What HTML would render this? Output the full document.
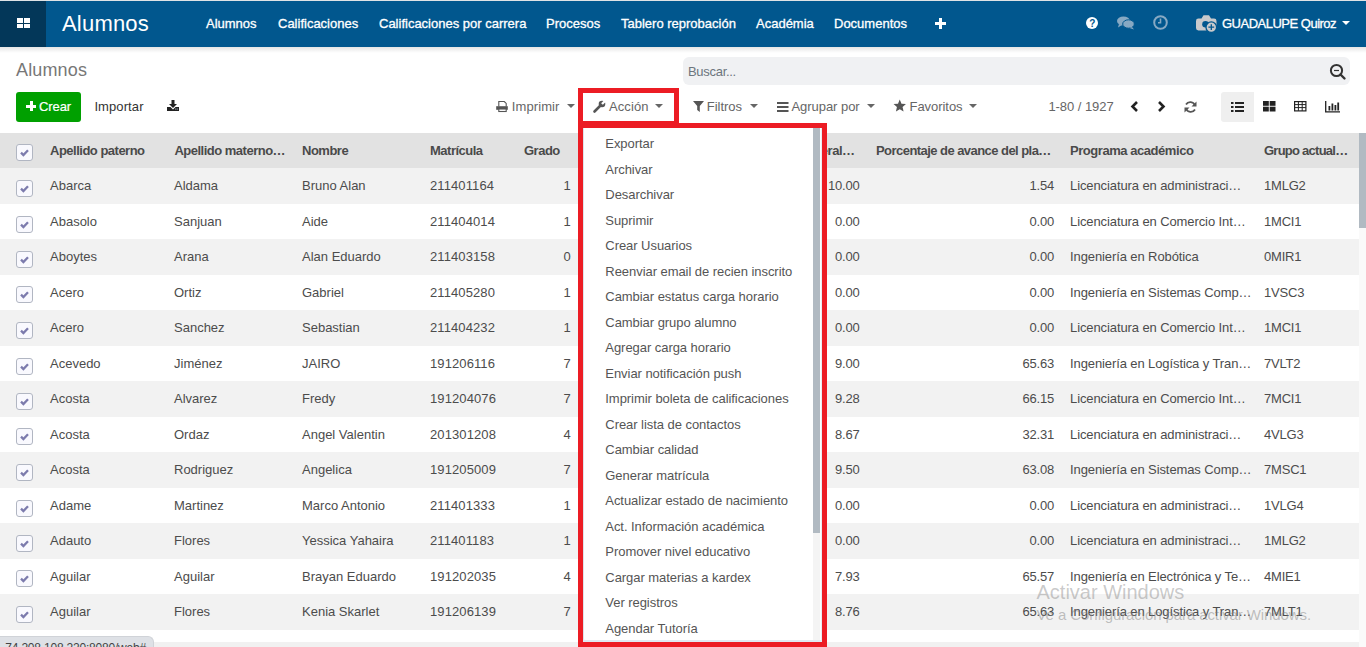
<!DOCTYPE html>
<html><head><meta charset="utf-8"><style>
*{box-sizing:border-box;margin:0;padding:0}
html,body{width:1366px;height:647px;overflow:hidden;background:#fff;font-family:"Liberation Sans",sans-serif;font-size:13px;color:#4c4c4c}
.a{position:absolute;white-space:nowrap}
.b{position:absolute}
svg{position:absolute;overflow:visible}
</style></head><body>
<div class="b" style="left:0;top:0;width:1366px;height:1px;background:#dfe3e6"></div><div class="b" style="left:0;top:1px;width:1366px;height:46px;background:#01578e"></div><div class="b" style="left:0;top:1px;width:46px;height:46px;background:#033759"></div><div class="b" style="left:17px;top:18px;width:6px;height:4.5px;background:#fff"></div><div class="b" style="left:24px;top:18px;width:6px;height:4.5px;background:#fff"></div><div class="b" style="left:17px;top:23.5px;width:6px;height:4.5px;background:#fff"></div><div class="b" style="left:24px;top:23.5px;width:6px;height:4.5px;background:#fff"></div><div class="b" style="left:0;top:47px;width:1366px;height:6px;background:linear-gradient(rgba(0,0,0,.10),rgba(0,0,0,0))"></div><div class="a " style="top:12.88px;font-size:22px;line-height:22px;left:62.00px;color:#fff;letter-spacing:0.2px;">Alumnos</div>
<div class="a " style="top:17.30px;font-size:13px;line-height:13px;left:206.00px;color:#fff;-webkit-text-stroke:0.3px #fff;">Alumnos</div>
<div class="a " style="top:17.30px;font-size:13px;line-height:13px;left:278.00px;color:#fff;-webkit-text-stroke:0.3px #fff;">Calificaciones</div>
<div class="a " style="top:17.30px;font-size:13px;line-height:13px;left:379.00px;color:#fff;-webkit-text-stroke:0.3px #fff;">Calificaciones por carrera</div>
<div class="a " style="top:17.30px;font-size:13px;line-height:13px;left:546.00px;color:#fff;-webkit-text-stroke:0.3px #fff;">Procesos</div>
<div class="a " style="top:17.30px;font-size:13px;line-height:13px;left:621.00px;color:#fff;-webkit-text-stroke:0.3px #fff;">Tablero reprobación</div>
<div class="a " style="top:17.30px;font-size:13px;line-height:13px;left:756.00px;color:#fff;-webkit-text-stroke:0.3px #fff;">Académia</div>
<div class="a " style="top:17.30px;font-size:13px;line-height:13px;left:834.00px;color:#fff;-webkit-text-stroke:0.3px #fff;">Documentos</div>
<div class="b" style="left:935px;top:21.5px;width:11px;height:3px;background:#fff"></div><div class="b" style="left:939px;top:17.5px;width:3px;height:11px;background:#fff"></div><div class="b" style="left:1086.2px;top:17.2px;width:12px;height:12px;border-radius:50%;background:#fff"></div><div class="a " style="top:18.73px;font-size:10px;line-height:10px;left:1089.20px;color:#01578e;font-weight:bold;">?</div>
<svg style="left:1117px;top:16px" width="18" height="14" viewBox="0 0 18 14"><ellipse cx="6.5" cy="5" rx="6.5" ry="4.6" fill="#87a9c3"/><path d="M2 8 L1 11.5 L5 9z" fill="#87a9c3"/><ellipse cx="11.5" cy="8" rx="5.8" ry="4.2" fill="#87a9c3" stroke="#01578e" stroke-width="1"/><path d="M15 11 L17 13.5 L12.5 12z" fill="#87a9c3"/></svg><svg style="left:1153px;top:15px" width="15" height="15" viewBox="0 0 15 15"><circle cx="7.5" cy="7.5" r="6.3" fill="none" stroke="#87a9c3" stroke-width="2"/><path d="M7.5 3.5 V7.8 H5" fill="none" stroke="#87a9c3" stroke-width="1.6"/></svg><svg style="left:1196px;top:14.6px" width="21" height="18" viewBox="0 0 21 18"><path d="M0 6 Q0 3.6 2.4 3.6 H5.5 L7.5 0.3 H13 L15 3.6 H18 Q20.5 3.6 20.5 6 V13 Q20.5 15.4 18 15.4 H2.4 Q0 15.4 0 13z" fill="#c9cacc"/><circle cx="9.5" cy="9.3" r="3.3" fill="#01578e"/><circle cx="15.3" cy="12.2" r="5.3" fill="#c9cacc" stroke="#01578e" stroke-width="1.3"/><path d="M15.3 9.3 V15.1 M12.4 12.2 H18.2" stroke="#01578e" stroke-width="1.3"/></svg><div class="a " style="top:17.20px;font-size:13px;line-height:13px;left:1222.00px;color:#fff;letter-spacing:-0.5px;-webkit-text-stroke:0.3px #fff;">GUADALUPE Quiroz</div>
<div class="b" style="left:1342px;top:21px;width:0;height:0;border-left:4px solid transparent;border-right:4px solid transparent;border-top:4px solid #fff"></div><div class="a " style="top:60.76px;font-size:18px;line-height:18px;left:16.00px;color:#777;letter-spacing:0.15px;">Alumnos</div>
<div class="b" style="left:683px;top:57px;width:667px;height:28px;background:#f0f1f3;border-radius:6px"></div><div class="a " style="top:65.00px;font-size:13px;line-height:13px;left:688.00px;color:#6c757d;letter-spacing:-0.3px;">Buscar...</div>
<svg style="left:1329px;top:63px" width="18" height="18" viewBox="0 0 18 18"><circle cx="7.5" cy="7.5" r="5.6" fill="none" stroke="#333" stroke-width="2"/><path d="M11.5 11.5 L15.5 15.5" stroke="#333" stroke-width="2.4" stroke-linecap="round"/><path d="M5 7.5 H10" stroke="#333" stroke-width="1.2"/></svg><div class="b" style="left:16px;top:92px;width:65px;height:30px;background:#00a000;border-radius:3px"></div><div class="b" style="left:26px;top:104.5px;width:10px;height:3px;background:#fff"></div><div class="b" style="left:29.5px;top:101px;width:3px;height:10px;background:#fff"></div><div class="a " style="top:100.00px;font-size:13px;line-height:13px;left:39.00px;color:#fff;letter-spacing:-0.1px;-webkit-text-stroke:0.2px #fff;">Crear</div>
<div class="a " style="top:100.00px;font-size:13px;line-height:13px;left:94.40px;color:#333;letter-spacing:0.1px;">Importar</div>
<svg style="left:167px;top:100px" width="12" height="11" viewBox="0 0 12 11"><path d="M4.5 0 H7.5 V4 H10 L6 8 L2 4 H4.5z" fill="#222"/><path d="M0 7 H3.5 L6 9.5 L8.5 7 H12 V11 H0z" fill="#222"/><rect x="8.3" y="8.6" width="0.9" height="0.9" fill="#cfe3f5"/><rect x="9.8" y="8.6" width="0.9" height="0.9" fill="#cfe3f5"/></svg><svg style="left:496px;top:101px" width="12" height="11" viewBox="0 0 12 11"><path d="M2.8 5.5 V0.55 H8.3 L10.2 2.4 V5.5" fill="none" stroke="#555" stroke-width="1.1"/><rect x="0.2" y="5.2" width="11.6" height="3.6" fill="#555"/><rect x="2.8" y="8" width="7.4" height="2.5" fill="#fff" stroke="#555" stroke-width="1.1"/></svg><div class="a " style="top:100.00px;font-size:13px;line-height:13px;left:511.80px;color:#666;letter-spacing:0.1px;">Imprimir</div>
<div class="b" style="left:566.5px;top:104px;width:0;height:0;border-left:4px solid transparent;border-right:4px solid transparent;border-top:4px solid #666"></div><svg style="left:593px;top:100px" width="13" height="13" viewBox="0 0 13 13"><path d="M1.5 11.5 L7 6" stroke="#555" stroke-width="2.6" stroke-linecap="round"/><circle cx="9" cy="4" r="3.3" fill="#555"/><path d="M9 4 L12.5 0.5" stroke="#fff" stroke-width="2.4"/></svg><div class="a " style="top:100.00px;font-size:13px;line-height:13px;left:609.00px;color:#666;letter-spacing:0.1px;">Acción</div>
<div class="b" style="left:654.7px;top:104px;width:0;height:0;border-left:4px solid transparent;border-right:4px solid transparent;border-top:4px solid #666"></div><svg style="left:693px;top:101px" width="11" height="11" viewBox="0 0 11 11"><path d="M0 0 H11 L6.8 5 V11 L4.2 9 V5z" fill="#555"/></svg><div class="a " style="top:100.00px;font-size:13px;line-height:13px;left:706.70px;color:#666;letter-spacing:0.0px;">Filtros</div>
<div class="b" style="left:749.5px;top:104px;width:0;height:0;border-left:4px solid transparent;border-right:4px solid transparent;border-top:4px solid #666"></div><svg style="left:776.5px;top:101.5px" width="12" height="10" viewBox="0 0 12 10"><rect x="0" y="0" width="11.5" height="2" fill="#555"/><rect x="0" y="4" width="11.5" height="2" fill="#555"/><rect x="0" y="8" width="11.5" height="2" fill="#555"/></svg><div class="a " style="top:100.00px;font-size:13px;line-height:13px;left:791.50px;color:#666;letter-spacing:-0.05px;">Agrupar por</div>
<div class="b" style="left:866.5px;top:104px;width:0;height:0;border-left:4px solid transparent;border-right:4px solid transparent;border-top:4px solid #666"></div><svg style="left:892.8px;top:99.3px" width="13.5" height="13.5" viewBox="0 0 24 24"><path d="M12 1 L15.1 8.3 L23 9 L17 14.3 L18.8 22 L12 18 L5.2 22 L7 14.3 L1 9 L8.9 8.3z" fill="#555"/></svg><div class="a " style="top:100.00px;font-size:13px;line-height:13px;left:909.50px;color:#666;letter-spacing:-0.05px;">Favoritos</div>
<div class="b" style="left:969px;top:104px;width:0;height:0;border-left:4px solid transparent;border-right:4px solid transparent;border-top:4px solid #666"></div><div class="a " style="top:100.00px;font-size:13px;line-height:13px;left:1048.40px;color:#666;letter-spacing:-0.05px;">1-80 / 1927</div>
<svg style="left:1130px;top:101px" width="9" height="11" viewBox="0 0 9 11"><path d="M7 1 L2.5 5.5 L7 10" fill="none" stroke="#222" stroke-width="2.6"/></svg><svg style="left:1157px;top:101px" width="9" height="11" viewBox="0 0 9 11"><path d="M2 1 L6.5 5.5 L2 10" fill="none" stroke="#222" stroke-width="2.6"/></svg><svg style="left:1184px;top:100.5px" width="13" height="12" viewBox="0 0 13 12"><path d="M11 4.5 A5 5 0 0 0 2 3.5" fill="none" stroke="#555" stroke-width="1.8"/><path d="M2 7.5 A5 5 0 0 0 11 8.5" fill="none" stroke="#555" stroke-width="1.8"/><path d="M12.5 0.5 V5.5 H7.5z" fill="#555"/><path d="M0.5 11.5 V6.5 H5.5z" fill="#555"/></svg><div class="b" style="left:1221px;top:92px;width:33px;height:30px;background:#efefef;border-radius:3px 0 0 3px"></div><svg style="left:1231px;top:101.5px" width="13" height="10" viewBox="0 0 13 10"><rect x="0" y="0" width="2.5" height="2" fill="#222"/><rect x="0" y="4" width="2.5" height="2" fill="#222"/><rect x="0" y="8" width="2.5" height="2" fill="#222"/><rect x="4" y="0" width="9" height="2" fill="#222"/><rect x="4" y="4" width="9" height="2" fill="#222"/><rect x="4" y="8" width="9" height="2" fill="#222"/></svg><svg style="left:1262.5px;top:101px" width="12.5" height="10.5" viewBox="0 0 12.5 10.5"><rect x="0" y="0" width="5.8" height="4.8" fill="#222"/><rect x="6.7" y="0" width="5.8" height="4.8" fill="#222"/><rect x="0" y="5.7" width="5.8" height="4.8" fill="#222"/><rect x="6.7" y="5.7" width="5.8" height="4.8" fill="#222"/></svg><svg style="left:1293.5px;top:101px" width="12.5" height="10.5" viewBox="0 0 12.5 10.5"><rect x="0.6" y="0.6" width="11.3" height="9.3" fill="none" stroke="#222" stroke-width="1.2"/><path d="M0.6 3.6 H11.9 M0.6 6.6 H11.9 M4.4 0.6 V9.9 M8.2 0.6 V9.9" stroke="#222" stroke-width="1"/></svg><svg style="left:1325px;top:100.5px" width="15" height="11.5" viewBox="0 0 15 11.5"><path d="M0.7 0 V10.8 H15" fill="none" stroke="#222" stroke-width="1.3"/><rect x="3.5" y="5" width="1.8" height="4.5" fill="#222"/><rect x="6.5" y="2.5" width="1.8" height="7" fill="#222"/><rect x="9.5" y="4" width="1.8" height="5.5" fill="#222"/><rect x="12.3" y="1.5" width="1.8" height="8" fill="#222"/></svg><div class="b" style="left:0;top:133px;width:1359px;height:35px;background:#e2e2e2"></div><div class="b" style="left:16px;top:144px;width:17px;height:17px;border:1px solid #b1b6c2;border-radius:3px;background:#f9f9fe"></div><svg style="left:16px;top:144px" width="17" height="17" viewBox="0 0 17 17"><path d="M5 8.6 L7.4 11 L12 6.2" fill="none" stroke="#7c7bad" stroke-width="2.3"/></svg><div class="a " style="top:144.00px;font-size:13px;line-height:13px;left:50.00px;color:#4a4a4a;font-weight:bold;letter-spacing:-0.5px;">Apellido paterno</div>
<div class="a " style="top:144.00px;font-size:13px;line-height:13px;left:174.40px;color:#4a4a4a;font-weight:bold;letter-spacing:-0.5px;">Apellido materno…</div>
<div class="a " style="top:144.00px;font-size:13px;line-height:13px;left:302.00px;color:#4a4a4a;font-weight:bold;letter-spacing:-0.5px;">Nombre</div>
<div class="a " style="top:144.00px;font-size:13px;line-height:13px;left:430.00px;color:#4a4a4a;font-weight:bold;letter-spacing:-0.5px;">Matrícula</div>
<div class="a " style="top:144.00px;font-size:13px;line-height:13px;left:524.00px;color:#4a4a4a;font-weight:bold;letter-spacing:-0.5px;">Grado</div>
<div class="a " style="top:144.00px;font-size:13px;line-height:13px;left:876.00px;color:#4a4a4a;font-weight:bold;letter-spacing:-0.55px;">Porcentaje de avance del pla…</div>
<div class="a " style="top:144.00px;font-size:13px;line-height:13px;left:1070.00px;color:#4a4a4a;font-weight:bold;letter-spacing:-0.45px;">Programa académico</div>
<div class="a " style="top:144.00px;font-size:13px;line-height:13px;left:1264.00px;color:#4a4a4a;font-weight:bold;letter-spacing:-0.75px;">Grupo actual…</div>
<div class="a " style="top:144.00px;font-size:13px;line-height:13px;right:511.50px;text-align:right;color:#4a4a4a;font-weight:bold;letter-spacing:-0.5px;">neral…</div>
<div class="b" style="left:0;top:168.0px;width:1359px;height:35.5px;background:#f2f2f2"></div><div class="b" style="left:16px;top:180px;width:17px;height:17px;border:1px solid #b1b6c2;border-radius:3px;background:#f9f9fe"></div><svg style="left:16px;top:180px" width="17" height="17" viewBox="0 0 17 17"><path d="M5 8.6 L7.4 11 L12 6.2" fill="none" stroke="#7c7bad" stroke-width="2.3"/></svg><div class="a " style="top:179.00px;font-size:13px;line-height:13px;left:50.00px;letter-spacing:0px;">Abarca</div>
<div class="a " style="top:179.00px;font-size:13px;line-height:13px;left:174.00px;letter-spacing:0px;">Aldama</div>
<div class="a " style="top:179.00px;font-size:13px;line-height:13px;left:302.00px;letter-spacing:0px;">Bruno Alan</div>
<div class="a " style="top:179.00px;font-size:13px;line-height:13px;left:430.00px;letter-spacing:0.1px;">211401164</div>
<div class="a " style="top:179.00px;font-size:13px;line-height:13px;right:795.40px;text-align:right;">1</div>
<div class="a " style="top:179.00px;font-size:13px;line-height:13px;right:506.50px;text-align:right;letter-spacing:-0.2px;">10.00</div>
<div class="a " style="top:179.00px;font-size:13px;line-height:13px;right:312.00px;text-align:right;letter-spacing:-0.2px;">1.54</div>
<div class="a " style="top:179.00px;font-size:13px;line-height:13px;left:1070.00px;letter-spacing:-0.1px;">Licenciatura en administraci…</div>
<div class="a " style="top:179.00px;font-size:13px;line-height:13px;left:1264.00px;letter-spacing:-0.2px;">1MLG2</div>
<div class="b" style="left:16px;top:216px;width:17px;height:17px;border:1px solid #b1b6c2;border-radius:3px;background:#f9f9fe"></div><svg style="left:16px;top:216px" width="17" height="17" viewBox="0 0 17 17"><path d="M5 8.6 L7.4 11 L12 6.2" fill="none" stroke="#7c7bad" stroke-width="2.3"/></svg><div class="a " style="top:214.50px;font-size:13px;line-height:13px;left:50.00px;letter-spacing:0px;">Abasolo</div>
<div class="a " style="top:214.50px;font-size:13px;line-height:13px;left:174.00px;letter-spacing:0px;">Sanjuan</div>
<div class="a " style="top:214.50px;font-size:13px;line-height:13px;left:302.00px;letter-spacing:0px;">Aide</div>
<div class="a " style="top:214.50px;font-size:13px;line-height:13px;left:430.00px;letter-spacing:0.1px;">211404014</div>
<div class="a " style="top:214.50px;font-size:13px;line-height:13px;right:795.40px;text-align:right;">1</div>
<div class="a " style="top:214.50px;font-size:13px;line-height:13px;right:506.50px;text-align:right;letter-spacing:-0.2px;">0.00</div>
<div class="a " style="top:214.50px;font-size:13px;line-height:13px;right:312.00px;text-align:right;letter-spacing:-0.2px;">0.00</div>
<div class="a " style="top:214.50px;font-size:13px;line-height:13px;left:1070.00px;letter-spacing:-0.1px;">Licenciatura en Comercio Int…</div>
<div class="a " style="top:214.50px;font-size:13px;line-height:13px;left:1264.00px;letter-spacing:-0.2px;">1MCI1</div>
<div class="b" style="left:0;top:239.0px;width:1359px;height:35.5px;background:#f2f2f2"></div><div class="b" style="left:16px;top:251px;width:17px;height:17px;border:1px solid #b1b6c2;border-radius:3px;background:#f9f9fe"></div><svg style="left:16px;top:251px" width="17" height="17" viewBox="0 0 17 17"><path d="M5 8.6 L7.4 11 L12 6.2" fill="none" stroke="#7c7bad" stroke-width="2.3"/></svg><div class="a " style="top:250.00px;font-size:13px;line-height:13px;left:50.00px;letter-spacing:0px;">Aboytes</div>
<div class="a " style="top:250.00px;font-size:13px;line-height:13px;left:174.00px;letter-spacing:0px;">Arana</div>
<div class="a " style="top:250.00px;font-size:13px;line-height:13px;left:302.00px;letter-spacing:0px;">Alan Eduardo</div>
<div class="a " style="top:250.00px;font-size:13px;line-height:13px;left:430.00px;letter-spacing:0.1px;">211403158</div>
<div class="a " style="top:250.00px;font-size:13px;line-height:13px;right:795.40px;text-align:right;">0</div>
<div class="a " style="top:250.00px;font-size:13px;line-height:13px;right:506.50px;text-align:right;letter-spacing:-0.2px;">0.00</div>
<div class="a " style="top:250.00px;font-size:13px;line-height:13px;right:312.00px;text-align:right;letter-spacing:-0.2px;">0.00</div>
<div class="a " style="top:250.00px;font-size:13px;line-height:13px;left:1070.00px;letter-spacing:-0.1px;">Ingeniería en Robótica</div>
<div class="a " style="top:250.00px;font-size:13px;line-height:13px;left:1264.00px;letter-spacing:-0.2px;">0MIR1</div>
<div class="b" style="left:16px;top:286px;width:17px;height:17px;border:1px solid #b1b6c2;border-radius:3px;background:#f9f9fe"></div><svg style="left:16px;top:286px" width="17" height="17" viewBox="0 0 17 17"><path d="M5 8.6 L7.4 11 L12 6.2" fill="none" stroke="#7c7bad" stroke-width="2.3"/></svg><div class="a " style="top:285.50px;font-size:13px;line-height:13px;left:50.00px;letter-spacing:0px;">Acero</div>
<div class="a " style="top:285.50px;font-size:13px;line-height:13px;left:174.00px;letter-spacing:0px;">Ortiz</div>
<div class="a " style="top:285.50px;font-size:13px;line-height:13px;left:302.00px;letter-spacing:0px;">Gabriel</div>
<div class="a " style="top:285.50px;font-size:13px;line-height:13px;left:430.00px;letter-spacing:0.1px;">211405280</div>
<div class="a " style="top:285.50px;font-size:13px;line-height:13px;right:795.40px;text-align:right;">1</div>
<div class="a " style="top:285.50px;font-size:13px;line-height:13px;right:506.50px;text-align:right;letter-spacing:-0.2px;">0.00</div>
<div class="a " style="top:285.50px;font-size:13px;line-height:13px;right:312.00px;text-align:right;letter-spacing:-0.2px;">0.00</div>
<div class="a " style="top:285.50px;font-size:13px;line-height:13px;left:1070.00px;letter-spacing:-0.1px;">Ingeniería en Sistemas Comp…</div>
<div class="a " style="top:285.50px;font-size:13px;line-height:13px;left:1264.00px;letter-spacing:-0.2px;">1VSC3</div>
<div class="b" style="left:0;top:310.0px;width:1359px;height:35.5px;background:#f2f2f2"></div><div class="b" style="left:16px;top:322px;width:17px;height:17px;border:1px solid #b1b6c2;border-radius:3px;background:#f9f9fe"></div><svg style="left:16px;top:322px" width="17" height="17" viewBox="0 0 17 17"><path d="M5 8.6 L7.4 11 L12 6.2" fill="none" stroke="#7c7bad" stroke-width="2.3"/></svg><div class="a " style="top:321.00px;font-size:13px;line-height:13px;left:50.00px;letter-spacing:0px;">Acero</div>
<div class="a " style="top:321.00px;font-size:13px;line-height:13px;left:174.00px;letter-spacing:0px;">Sanchez</div>
<div class="a " style="top:321.00px;font-size:13px;line-height:13px;left:302.00px;letter-spacing:0px;">Sebastian</div>
<div class="a " style="top:321.00px;font-size:13px;line-height:13px;left:430.00px;letter-spacing:0.1px;">211404232</div>
<div class="a " style="top:321.00px;font-size:13px;line-height:13px;right:795.40px;text-align:right;">1</div>
<div class="a " style="top:321.00px;font-size:13px;line-height:13px;right:506.50px;text-align:right;letter-spacing:-0.2px;">0.00</div>
<div class="a " style="top:321.00px;font-size:13px;line-height:13px;right:312.00px;text-align:right;letter-spacing:-0.2px;">0.00</div>
<div class="a " style="top:321.00px;font-size:13px;line-height:13px;left:1070.00px;letter-spacing:-0.1px;">Licenciatura en Comercio Int…</div>
<div class="a " style="top:321.00px;font-size:13px;line-height:13px;left:1264.00px;letter-spacing:-0.2px;">1MCI1</div>
<div class="b" style="left:16px;top:358px;width:17px;height:17px;border:1px solid #b1b6c2;border-radius:3px;background:#f9f9fe"></div><svg style="left:16px;top:358px" width="17" height="17" viewBox="0 0 17 17"><path d="M5 8.6 L7.4 11 L12 6.2" fill="none" stroke="#7c7bad" stroke-width="2.3"/></svg><div class="a " style="top:356.50px;font-size:13px;line-height:13px;left:50.00px;letter-spacing:0px;">Acevedo</div>
<div class="a " style="top:356.50px;font-size:13px;line-height:13px;left:174.00px;letter-spacing:0px;">Jiménez</div>
<div class="a " style="top:356.50px;font-size:13px;line-height:13px;left:302.00px;letter-spacing:0px;">JAIRO</div>
<div class="a " style="top:356.50px;font-size:13px;line-height:13px;left:430.00px;letter-spacing:0.1px;">191206116</div>
<div class="a " style="top:356.50px;font-size:13px;line-height:13px;right:795.40px;text-align:right;">7</div>
<div class="a " style="top:356.50px;font-size:13px;line-height:13px;right:506.50px;text-align:right;letter-spacing:-0.2px;">9.00</div>
<div class="a " style="top:356.50px;font-size:13px;line-height:13px;right:312.00px;text-align:right;letter-spacing:-0.2px;">65.63</div>
<div class="a " style="top:356.50px;font-size:13px;line-height:13px;left:1070.00px;letter-spacing:-0.1px;">Ingeniería en Logística y Tran…</div>
<div class="a " style="top:356.50px;font-size:13px;line-height:13px;left:1264.00px;letter-spacing:-0.2px;">7VLT2</div>
<div class="b" style="left:0;top:381.0px;width:1359px;height:35.5px;background:#f2f2f2"></div><div class="b" style="left:16px;top:393px;width:17px;height:17px;border:1px solid #b1b6c2;border-radius:3px;background:#f9f9fe"></div><svg style="left:16px;top:393px" width="17" height="17" viewBox="0 0 17 17"><path d="M5 8.6 L7.4 11 L12 6.2" fill="none" stroke="#7c7bad" stroke-width="2.3"/></svg><div class="a " style="top:392.00px;font-size:13px;line-height:13px;left:50.00px;letter-spacing:0px;">Acosta</div>
<div class="a " style="top:392.00px;font-size:13px;line-height:13px;left:174.00px;letter-spacing:0px;">Alvarez</div>
<div class="a " style="top:392.00px;font-size:13px;line-height:13px;left:302.00px;letter-spacing:0px;">Fredy</div>
<div class="a " style="top:392.00px;font-size:13px;line-height:13px;left:430.00px;letter-spacing:0.1px;">191204076</div>
<div class="a " style="top:392.00px;font-size:13px;line-height:13px;right:795.40px;text-align:right;">7</div>
<div class="a " style="top:392.00px;font-size:13px;line-height:13px;right:506.50px;text-align:right;letter-spacing:-0.2px;">9.28</div>
<div class="a " style="top:392.00px;font-size:13px;line-height:13px;right:312.00px;text-align:right;letter-spacing:-0.2px;">66.15</div>
<div class="a " style="top:392.00px;font-size:13px;line-height:13px;left:1070.00px;letter-spacing:-0.1px;">Licenciatura en Comercio Int…</div>
<div class="a " style="top:392.00px;font-size:13px;line-height:13px;left:1264.00px;letter-spacing:-0.2px;">7MCI1</div>
<div class="b" style="left:16px;top:428px;width:17px;height:17px;border:1px solid #b1b6c2;border-radius:3px;background:#f9f9fe"></div><svg style="left:16px;top:428px" width="17" height="17" viewBox="0 0 17 17"><path d="M5 8.6 L7.4 11 L12 6.2" fill="none" stroke="#7c7bad" stroke-width="2.3"/></svg><div class="a " style="top:427.50px;font-size:13px;line-height:13px;left:50.00px;letter-spacing:0px;">Acosta</div>
<div class="a " style="top:427.50px;font-size:13px;line-height:13px;left:174.00px;letter-spacing:0px;">Ordaz</div>
<div class="a " style="top:427.50px;font-size:13px;line-height:13px;left:302.00px;letter-spacing:0px;">Angel Valentin</div>
<div class="a " style="top:427.50px;font-size:13px;line-height:13px;left:430.00px;letter-spacing:0.1px;">201301208</div>
<div class="a " style="top:427.50px;font-size:13px;line-height:13px;right:795.40px;text-align:right;">4</div>
<div class="a " style="top:427.50px;font-size:13px;line-height:13px;right:506.50px;text-align:right;letter-spacing:-0.2px;">8.67</div>
<div class="a " style="top:427.50px;font-size:13px;line-height:13px;right:312.00px;text-align:right;letter-spacing:-0.2px;">32.31</div>
<div class="a " style="top:427.50px;font-size:13px;line-height:13px;left:1070.00px;letter-spacing:-0.1px;">Licenciatura en administraci…</div>
<div class="a " style="top:427.50px;font-size:13px;line-height:13px;left:1264.00px;letter-spacing:-0.2px;">4VLG3</div>
<div class="b" style="left:0;top:452.0px;width:1359px;height:35.5px;background:#f2f2f2"></div><div class="b" style="left:16px;top:464px;width:17px;height:17px;border:1px solid #b1b6c2;border-radius:3px;background:#f9f9fe"></div><svg style="left:16px;top:464px" width="17" height="17" viewBox="0 0 17 17"><path d="M5 8.6 L7.4 11 L12 6.2" fill="none" stroke="#7c7bad" stroke-width="2.3"/></svg><div class="a " style="top:463.00px;font-size:13px;line-height:13px;left:50.00px;letter-spacing:0px;">Acosta</div>
<div class="a " style="top:463.00px;font-size:13px;line-height:13px;left:174.00px;letter-spacing:0px;">Rodriguez</div>
<div class="a " style="top:463.00px;font-size:13px;line-height:13px;left:302.00px;letter-spacing:0px;">Angelica</div>
<div class="a " style="top:463.00px;font-size:13px;line-height:13px;left:430.00px;letter-spacing:0.1px;">191205009</div>
<div class="a " style="top:463.00px;font-size:13px;line-height:13px;right:795.40px;text-align:right;">7</div>
<div class="a " style="top:463.00px;font-size:13px;line-height:13px;right:506.50px;text-align:right;letter-spacing:-0.2px;">9.50</div>
<div class="a " style="top:463.00px;font-size:13px;line-height:13px;right:312.00px;text-align:right;letter-spacing:-0.2px;">63.08</div>
<div class="a " style="top:463.00px;font-size:13px;line-height:13px;left:1070.00px;letter-spacing:-0.1px;">Ingeniería en Sistemas Comp…</div>
<div class="a " style="top:463.00px;font-size:13px;line-height:13px;left:1264.00px;letter-spacing:-0.2px;">7MSC1</div>
<div class="b" style="left:16px;top:500px;width:17px;height:17px;border:1px solid #b1b6c2;border-radius:3px;background:#f9f9fe"></div><svg style="left:16px;top:500px" width="17" height="17" viewBox="0 0 17 17"><path d="M5 8.6 L7.4 11 L12 6.2" fill="none" stroke="#7c7bad" stroke-width="2.3"/></svg><div class="a " style="top:498.50px;font-size:13px;line-height:13px;left:50.00px;letter-spacing:0px;">Adame</div>
<div class="a " style="top:498.50px;font-size:13px;line-height:13px;left:174.00px;letter-spacing:0px;">Martinez</div>
<div class="a " style="top:498.50px;font-size:13px;line-height:13px;left:302.00px;letter-spacing:0px;">Marco Antonio</div>
<div class="a " style="top:498.50px;font-size:13px;line-height:13px;left:430.00px;letter-spacing:0.1px;">211401333</div>
<div class="a " style="top:498.50px;font-size:13px;line-height:13px;right:795.40px;text-align:right;">1</div>
<div class="a " style="top:498.50px;font-size:13px;line-height:13px;right:506.50px;text-align:right;letter-spacing:-0.2px;">0.00</div>
<div class="a " style="top:498.50px;font-size:13px;line-height:13px;right:312.00px;text-align:right;letter-spacing:-0.2px;">0.00</div>
<div class="a " style="top:498.50px;font-size:13px;line-height:13px;left:1070.00px;letter-spacing:-0.1px;">Licenciatura en administraci…</div>
<div class="a " style="top:498.50px;font-size:13px;line-height:13px;left:1264.00px;letter-spacing:-0.2px;">1VLG4</div>
<div class="b" style="left:0;top:523.0px;width:1359px;height:35.5px;background:#f2f2f2"></div><div class="b" style="left:16px;top:535px;width:17px;height:17px;border:1px solid #b1b6c2;border-radius:3px;background:#f9f9fe"></div><svg style="left:16px;top:535px" width="17" height="17" viewBox="0 0 17 17"><path d="M5 8.6 L7.4 11 L12 6.2" fill="none" stroke="#7c7bad" stroke-width="2.3"/></svg><div class="a " style="top:534.00px;font-size:13px;line-height:13px;left:50.00px;letter-spacing:0px;">Adauto</div>
<div class="a " style="top:534.00px;font-size:13px;line-height:13px;left:174.00px;letter-spacing:0px;">Flores</div>
<div class="a " style="top:534.00px;font-size:13px;line-height:13px;left:302.00px;letter-spacing:0px;">Yessica Yahaira</div>
<div class="a " style="top:534.00px;font-size:13px;line-height:13px;left:430.00px;letter-spacing:0.1px;">211401183</div>
<div class="a " style="top:534.00px;font-size:13px;line-height:13px;right:795.40px;text-align:right;">1</div>
<div class="a " style="top:534.00px;font-size:13px;line-height:13px;right:506.50px;text-align:right;letter-spacing:-0.2px;">0.00</div>
<div class="a " style="top:534.00px;font-size:13px;line-height:13px;right:312.00px;text-align:right;letter-spacing:-0.2px;">0.00</div>
<div class="a " style="top:534.00px;font-size:13px;line-height:13px;left:1070.00px;letter-spacing:-0.1px;">Licenciatura en administraci…</div>
<div class="a " style="top:534.00px;font-size:13px;line-height:13px;left:1264.00px;letter-spacing:-0.2px;">1MLG2</div>
<div class="b" style="left:16px;top:570px;width:17px;height:17px;border:1px solid #b1b6c2;border-radius:3px;background:#f9f9fe"></div><svg style="left:16px;top:570px" width="17" height="17" viewBox="0 0 17 17"><path d="M5 8.6 L7.4 11 L12 6.2" fill="none" stroke="#7c7bad" stroke-width="2.3"/></svg><div class="a " style="top:569.50px;font-size:13px;line-height:13px;left:50.00px;letter-spacing:0px;">Aguilar</div>
<div class="a " style="top:569.50px;font-size:13px;line-height:13px;left:174.00px;letter-spacing:0px;">Aguilar</div>
<div class="a " style="top:569.50px;font-size:13px;line-height:13px;left:302.00px;letter-spacing:0px;">Brayan Eduardo</div>
<div class="a " style="top:569.50px;font-size:13px;line-height:13px;left:430.00px;letter-spacing:0.1px;">191202035</div>
<div class="a " style="top:569.50px;font-size:13px;line-height:13px;right:795.40px;text-align:right;">4</div>
<div class="a " style="top:569.50px;font-size:13px;line-height:13px;right:506.50px;text-align:right;letter-spacing:-0.2px;">7.93</div>
<div class="a " style="top:569.50px;font-size:13px;line-height:13px;right:312.00px;text-align:right;letter-spacing:-0.2px;">65.57</div>
<div class="a " style="top:569.50px;font-size:13px;line-height:13px;left:1070.00px;letter-spacing:-0.1px;">Ingeniería en Electrónica y Te…</div>
<div class="a " style="top:569.50px;font-size:13px;line-height:13px;left:1264.00px;letter-spacing:-0.2px;">4MIE1</div>
<div class="b" style="left:0;top:594.0px;width:1359px;height:35.5px;background:#f2f2f2"></div><div class="b" style="left:16px;top:606px;width:17px;height:17px;border:1px solid #b1b6c2;border-radius:3px;background:#f9f9fe"></div><svg style="left:16px;top:606px" width="17" height="17" viewBox="0 0 17 17"><path d="M5 8.6 L7.4 11 L12 6.2" fill="none" stroke="#7c7bad" stroke-width="2.3"/></svg><div class="a " style="top:605.00px;font-size:13px;line-height:13px;left:50.00px;letter-spacing:0px;">Aguilar</div>
<div class="a " style="top:605.00px;font-size:13px;line-height:13px;left:174.00px;letter-spacing:0px;">Flores</div>
<div class="a " style="top:605.00px;font-size:13px;line-height:13px;left:302.00px;letter-spacing:0px;">Kenia Skarlet</div>
<div class="a " style="top:605.00px;font-size:13px;line-height:13px;left:430.00px;letter-spacing:0.1px;">191206139</div>
<div class="a " style="top:605.00px;font-size:13px;line-height:13px;right:795.40px;text-align:right;">7</div>
<div class="a " style="top:605.00px;font-size:13px;line-height:13px;right:506.50px;text-align:right;letter-spacing:-0.2px;">8.76</div>
<div class="a " style="top:605.00px;font-size:13px;line-height:13px;right:312.00px;text-align:right;letter-spacing:-0.2px;">65.63</div>
<div class="a " style="top:605.00px;font-size:13px;line-height:13px;left:1070.00px;letter-spacing:-0.1px;">Ingeniería en Logística y Tran…</div>
<div class="a " style="top:605.00px;font-size:13px;line-height:13px;left:1264.00px;letter-spacing:-0.2px;">7MLT1</div>
<div class="b" style="left:0;top:642px;width:1359px;height:5px;background:#f1f1f1"></div><div class="b" style="left:1359px;top:133px;width:7px;height:514px;background:#fafafa"></div><div class="b" style="left:1359px;top:133px;width:7px;height:95px;background:#b1bac2"></div><div class="b" style="left:583px;top:124px;width:240px;height:518px;background:#fff;border:1px solid #dde3ea;border-radius:3px"></div><div class="a " style="top:137.30px;font-size:13px;line-height:13px;left:605.30px;color:#555;letter-spacing:-0.05px;">Exportar</div>
<div class="a " style="top:162.80px;font-size:13px;line-height:13px;left:605.30px;color:#555;letter-spacing:-0.05px;">Archivar</div>
<div class="a " style="top:188.30px;font-size:13px;line-height:13px;left:605.30px;color:#555;letter-spacing:-0.05px;">Desarchivar</div>
<div class="a " style="top:213.80px;font-size:13px;line-height:13px;left:605.30px;color:#555;letter-spacing:-0.05px;">Suprimir</div>
<div class="a " style="top:239.30px;font-size:13px;line-height:13px;left:605.30px;color:#555;letter-spacing:-0.05px;">Crear Usuarios</div>
<div class="a " style="top:264.80px;font-size:13px;line-height:13px;left:605.30px;color:#555;letter-spacing:-0.05px;">Reenviar email de recien inscrito</div>
<div class="a " style="top:290.30px;font-size:13px;line-height:13px;left:605.30px;color:#555;letter-spacing:-0.05px;">Cambiar estatus carga horario</div>
<div class="a " style="top:315.80px;font-size:13px;line-height:13px;left:605.30px;color:#555;letter-spacing:-0.05px;">Cambiar grupo alumno</div>
<div class="a " style="top:341.30px;font-size:13px;line-height:13px;left:605.30px;color:#555;letter-spacing:-0.05px;">Agregar carga horario</div>
<div class="a " style="top:366.80px;font-size:13px;line-height:13px;left:605.30px;color:#555;letter-spacing:-0.05px;">Enviar notificación push</div>
<div class="a " style="top:392.30px;font-size:13px;line-height:13px;left:605.30px;color:#555;letter-spacing:-0.05px;">Imprimir boleta de calificaciones</div>
<div class="a " style="top:417.80px;font-size:13px;line-height:13px;left:605.30px;color:#555;letter-spacing:-0.05px;">Crear lista de contactos</div>
<div class="a " style="top:443.30px;font-size:13px;line-height:13px;left:605.30px;color:#555;letter-spacing:-0.05px;">Cambiar calidad</div>
<div class="a " style="top:468.80px;font-size:13px;line-height:13px;left:605.30px;color:#555;letter-spacing:-0.05px;">Generar matrícula</div>
<div class="a " style="top:494.30px;font-size:13px;line-height:13px;left:605.30px;color:#555;letter-spacing:-0.05px;">Actualizar estado de nacimiento</div>
<div class="a " style="top:519.80px;font-size:13px;line-height:13px;left:605.30px;color:#555;letter-spacing:-0.05px;">Act. Información académica</div>
<div class="a " style="top:545.30px;font-size:13px;line-height:13px;left:605.30px;color:#555;letter-spacing:-0.05px;">Promover nivel educativo</div>
<div class="a " style="top:570.80px;font-size:13px;line-height:13px;left:605.30px;color:#555;letter-spacing:-0.05px;">Cargar materias a kardex</div>
<div class="a " style="top:596.30px;font-size:13px;line-height:13px;left:605.30px;color:#555;letter-spacing:-0.05px;">Ver registros</div>
<div class="a " style="top:621.80px;font-size:13px;line-height:13px;left:605.30px;color:#555;letter-spacing:-0.05px;">Agendar Tutoría</div>
<div class="b" style="left:813px;top:128px;width:7px;height:512px;background:#f4f4f4"></div><div class="b" style="left:813px;top:128px;width:7px;height:405px;background:#b1bac2"></div><div class="b" style="left:820.5px;top:128px;width:1.5px;height:513px;background:#e6eef5"></div><div class="b" style="left:583px;top:640px;width:239px;height:2px;background:#e0e9f1"></div><div class="b" style="left:578px;top:88px;width:101px;height:38px;border:5px solid #ec1c24"></div><div class="b" style="left:578px;top:123px;width:249px;height:524px;border:5px solid #ec1c24;border-bottom:none"></div><div class="b" style="left:578px;top:642px;width:249px;height:5px;background:#ec1c24"></div><div class="b" style="left:0;top:636px;width:154px;height:11px;background:#dee1e6;border-top-right-radius:6px;border:1px solid #d0d3d8;border-left:none;border-bottom:none"></div><div class="a " style="top:642.14px;font-size:12px;line-height:12px;left:5.30px;color:#444;letter-spacing:-0.2px;">74.208.108.220:8080/web#</div>
<div class="a " style="top:581.67px;font-size:20px;line-height:20px;left:1036.50px;color:rgba(128,128,128,.42);">Activar Windows</div>
<div class="a " style="top:606.80px;font-size:15px;line-height:15px;left:1036.50px;color:rgba(128,128,128,.48);letter-spacing:-0.1px;">Ve a Configuración para activar Windows.</div>
</body></html>
